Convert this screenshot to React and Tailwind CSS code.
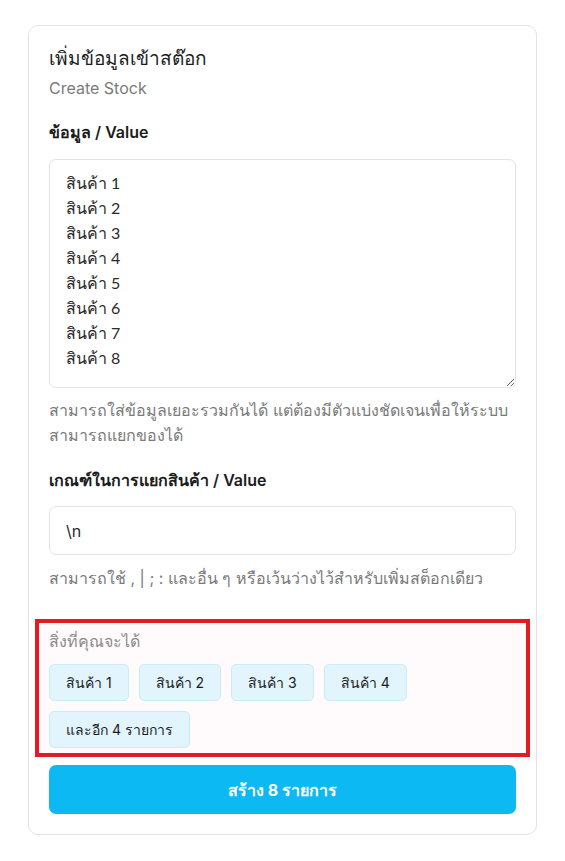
import React, { useState } from 'react';

const App = () => {
  const [value, setValue] = useState(
    'สินค้า 1\nสินค้า 2\nสินค้า 3\nสินค้า 4\nสินค้า 5\nสินค้า 6\nสินค้า 7\nสินค้า 8'
  );
  const [separator, setSeparator] = useState('\\n');

  const items = value.split('\n').filter((s) => s.trim());
  const preview = items.slice(0, 4);
  const rest = items.length - preview.length;

  return (
    <div className="min-h-[861px] bg-white pt-[25px] font-['Inter','Noto_Sans',sans-serif] text-[#1c1c1c]">
      <div className="mx-7 rounded-[10px] border border-[#e3e3e3] px-5 pt-5 pb-5">
        <h1 className="text-[19px] leading-[26px] font-medium">เพิ่มข้อมูลเข้าสต๊อก</h1>
        <p className="mt-1 text-[16px] leading-6 text-[#7a7a7a]">Create Stock</p>

        <label className="mt-5 block text-[16px] leading-6 font-semibold">ข้อมูล / Value</label>
        <textarea
          value={value}
          onChange={(e) => setValue(e.target.value)}
          className="mt-[15px] block h-[229px] w-full rounded-[7px] border border-[#e3e3e3] px-4 py-[10px] font-['Lato',sans-serif] text-[16px] leading-[25px] text-[#2a2a2a] outline-none"
        />
        <p className="mt-[10px] text-[16px] leading-[25px] text-[#7a7a7a]">
          สามารถใส่ข้อมูลเยอะรวมกันได้ แต่ต้องมีตัวแบ่งชัดเจนเพื่อให้ระบบสามารถแยกของได้
        </p>

        <label className="mt-5 block text-[16px] leading-6 font-semibold">เกณฑ์ในการแยกสินค้า / Value</label>
        <input
          value={separator}
          onChange={(e) => setSeparator(e.target.value)}
          className="mt-[14px] block h-[49px] w-full rounded-[7px] border border-[#e3e3e3] px-4 text-[16px] text-[#2a2a2a] outline-none"
        />
        <p className="mt-[11px] text-[16px] leading-6 text-[#7a7a7a]">
          สามารถใช้ , | ; : และอื่น ๆ หรือเว้นว่างไว้สำหรับเพิ่มสต็อกเดียว
        </p>

        {/* Preview */}
        <div className="-mx-[14px] mt-[29px] border-4 border-[#e31b23] bg-[#fffbfd] px-[10px] pt-[6px] pb-[5px]">
          <p className="text-[16px] leading-6 text-[#8a8a8a]">สิ่งที่คุณจะได้</p>
          <div className="mt-[11px] flex flex-wrap gap-[10px]">
            {preview.map((item) => (
              <span
                key={item}
                className="flex h-[37px] items-center rounded-[5px] border border-[#c9ecf9] bg-[#e2f5fc] px-4 text-[14px]"
              >
                {item}
              </span>
            ))}
            {rest > 0 && (
              <span className="flex h-[37px] items-center rounded-[5px] border border-[#c9ecf9] bg-[#e2f5fc] px-4 text-[14px]">
                และอีก {rest} รายการ
              </span>
            )}
          </div>
        </div>

        <button className="mt-2 flex h-[49px] w-full items-center justify-center rounded-[7px] bg-[#0cb9f2] text-[16px] font-bold text-white">
          สร้าง {items.length} รายการ
        </button>
      </div>
    </div>
  );
};

export default App;
